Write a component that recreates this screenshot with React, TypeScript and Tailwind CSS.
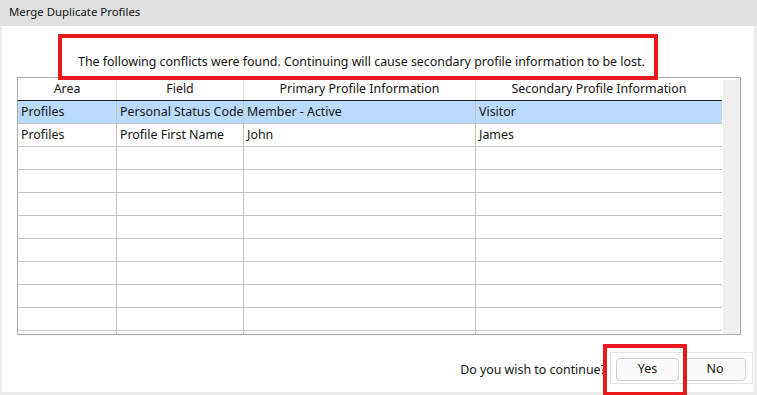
import React from 'react';

const rows = [
  { area: 'Profiles', field: 'Personal Status Code', primary: 'Member - Active', secondary: 'Visitor', selected: true },
  { area: 'Profiles', field: 'Profile First Name', primary: 'John', secondary: 'James', selected: false },
];

const emptyRows = 9;

const cols = ['w-[99px]', 'w-[127px]', 'w-[232px]', 'w-[246px]'];

const App: React.FC = () => {
  const allRows = [
    ...rows,
    ...Array.from({ length: emptyRows }, () => ({ area: '', field: '', primary: '', secondary: '', selected: false })),
  ];

  return (
    <div
      className="relative w-[757px] h-[395px] bg-white text-[12.4px] text-[#141414] overflow-hidden"
      style={{ fontFamily: '"Noto Sans", sans-serif' }}
    >
      {/* Title bar */}
      <div className="h-[26px] bg-[#e0e0e0] flex items-center pl-[9px] pb-[2px] text-[11.4px]">Merge Duplicate Profiles</div>

      {/* Body */}
      <div className="h-[369px] border-l-2 border-r-[3px] border-b-[3px] border-[#ececec] flex flex-col">
        <div className="h-[51px] shrink-0 flex items-center pl-[76px] pt-[22px]">
          The following conflicts were found. Continuing will cause secondary profile information to be lost.
        </div>

        {/* Grid */}
        <div className="ml-[15px] w-[724px] h-[258px] shrink-0 border border-[#ababab] flex overflow-hidden">
          <div className="flex flex-col w-[705px]">
            <div className="flex h-[23px] shrink-0 border-b border-[#1a1a1a]">
              {['Area', 'Field', 'Primary Profile Information', 'Secondary Profile Information'].map((h, i) => (
                <div
                  key={h}
                  className={`${cols[i]} shrink-0 flex items-center justify-center ${i < 3 ? 'border-r border-[#e3e3e3]' : ''}`}
                >
                  {h}
                </div>
              ))}
            </div>
            {allRows.map((r, idx) => (
              <div
                key={idx}
                className={`flex h-[23px] shrink-0 border-b border-[#c4c4c4] ${r.selected ? 'bg-[#b9dbfd]' : 'bg-white'}`}
              >
                {[r.area, r.field, r.primary, r.secondary].map((c, i) => (
                  <div
                    key={i}
                    className={`${cols[i]} shrink-0 flex items-center pl-[3px] whitespace-nowrap overflow-hidden ${
                      i < 3 ? 'border-r border-[#c4c4c4]' : ''
                    }`}
                  >
                    {c}
                  </div>
                ))}
              </div>
            ))}
          </div>
          <div className="w-[18px] shrink-0 border-t-2 border-l border-white bg-[#f0f0f0]" />
        </div>

        {/* Footer */}
        <div className="flex justify-end items-center mt-[17px] pr-[1px]">
          <span className="mr-[4px] pt-[4px]">Do you wish to continue?</span>
          <div className="flex gap-[5px] items-start border border-[#e5e5e5] h-[32px] pt-[5px] pl-[5px] pr-[6px]">
            <button className="w-[63px] h-[23px] rounded-[4px] border border-[#d0d0d0] bg-[#fbfbfb]">Yes</button>
            <button className="w-[62px] h-[23px] rounded-[4px] border border-[#d0d0d0] bg-[#fbfbfb]">No</button>
          </div>
        </div>
      </div>

      {/* Red annotation boxes */}
      <div className="absolute left-[58px] top-[34px] w-[600px] h-[46px] border-4 border-[#e8191d] pointer-events-none" />
      <div className="absolute left-[603px] top-[344px] w-[84px] h-[52px] border-4 border-[#e8191d] pointer-events-none" />
    </div>
  );
};

export default App;
